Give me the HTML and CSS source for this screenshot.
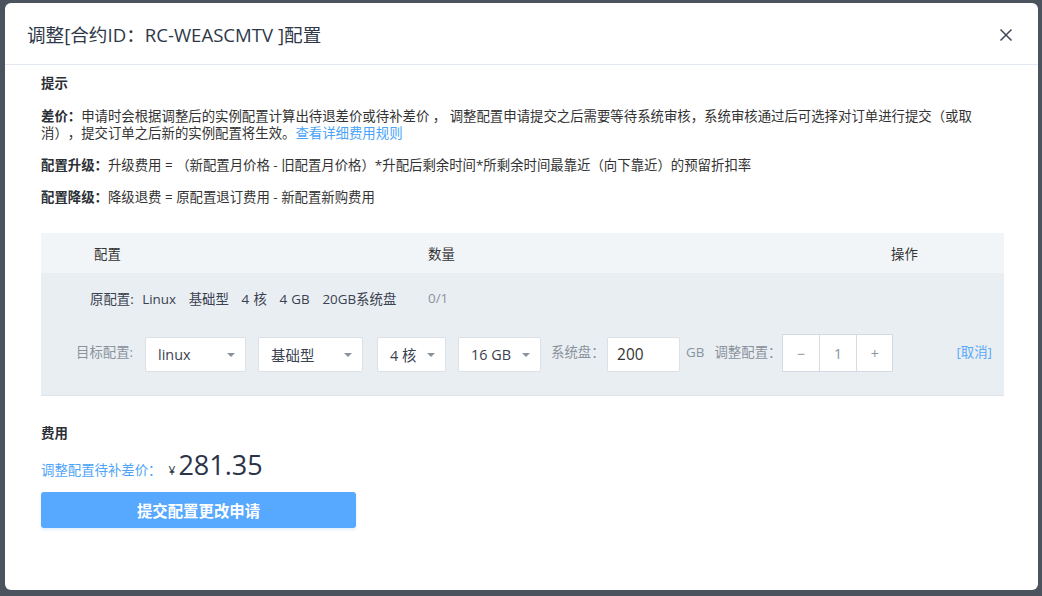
FILE: index.html
```html
<!DOCTYPE html>
<html lang="zh">
<head>
<meta charset="utf-8">
<title>调整配置</title>
<link rel="stylesheet" href="styles.css">
</head>
<body>
<div class="modal">
  <div class="modal-header">
    <div class="modal-title">调整[合约ID：RC-WEASCMTV ]配置</div>
    <svg class="close" width="14" height="14" viewBox="0 0 14 14"><path d="M1.5 1.5 L12.5 12.5 M12.5 1.5 L1.5 12.5" stroke="#3f4757" stroke-width="1.5" fill="none"/></svg>
  </div>
  <div class="modal-body">
    <div class="section-title">提示</div>
    <p class="tip tip-first"><b>差价：</b>申请时会根据调整后的实例配置计算出待退差价或待补差价 ， 调整配置申请提交之后需要等待系统审核，系统审核通过后可选择对订单进行提交（或取消），提交订单之后新的实例配置将生效。<a class="link">查看详细费用规则</a></p>
    <p class="tip"><b>配置升级：</b>升级费用 = （新配置月价格 - 旧配置月价格）*升配后剩余时间*所剩余时间最靠近（向下靠近）的预留折扣率</p>
    <p class="tip"><b>配置降级：</b>降级退费 = 原配置退订费用 - 新配置新购费用</p>

    <div class="table">
      <div class="thead">
        <div class="col-a">配置</div>
        <div class="col-b">数量</div>
        <div class="col-c">操作</div>
      </div>
      <div class="tbody">
        <div class="row-orig">
          <div class="col-a">原配置:&nbsp; Linux&nbsp;&nbsp; 基础型&nbsp;&nbsp; 4 核&nbsp;&nbsp; 4 GB&nbsp;&nbsp; 20GB系统盘</div>
          <div class="col-b muted">0/1</div>
        </div>
        <div class="row-target">
          <span class="label first-label">目标配置:</span>
          <div class="select w-os"><span>linux</span><i class="caret"></i></div>
          <div class="select w-type"><span>基础型</span><i class="caret"></i></div>
          <div class="select w-cpu"><span>4 核</span><i class="caret"></i></div>
          <div class="select w-mem"><span>16 GB</span><i class="caret"></i></div>
          <span class="label disk-label">系统盘：</span>
          <div class="input">200</div>
          <span class="label gb">GB</span>
          <span class="label adj">调整配置：</span>
          <div class="stepper">
            <span class="step-btn">−</span>
            <span class="step-val">1</span>
            <span class="step-btn">+</span>
          </div>
          <a class="link cancel">[取消]</a>
        </div>
      </div>
    </div>

    <div class="section-title fee-title">费用</div>
    <div class="price-row">
      <span class="price-label">调整配置待补差价：</span>
      <span class="yen">¥</span><span class="price">281.35</span>
    </div>
    <button class="submit">提交配置更改申请</button>
  </div>
</div>
</body>
</html>
```

FILE: styles.css
```css
html, body {
  margin: 0;
  padding: 0;
}
body {
  background: #4b545e;
  width: 1042px;
  height: 596px;
  overflow: hidden;
  font-family: "Open Sans", "Noto Sans CJK SC", sans-serif;
  color: #333;
  text-spacing-trim: space-all;
}
.modal {
  margin: 3px 0 0 5px;
  width: 1033px;
  height: 587px;
  background: #fff;
  border-radius: 6px;
  overflow: hidden;
}
.modal-header {
  height: 61px;
  border-bottom: 1px solid #e3e9f0;
  display: flex;
  align-items: center;
  justify-content: space-between;
  padding: 0 25px 0 22px;
}
.modal-title {
  font-size: 18.6px;
  color: #2f3848;
}
.close {
  display: block;
  margin-top: 2px;
}
.modal-body {
  padding: 0 34px 0 36px;
  font-size: 13.4px;
}
.section-title {
  font-weight: bold;
  line-height: 18px;
  margin-top: 9px;
  color: #2b2f36;
}
.tip {
  margin: 15px 0 0;
  line-height: 17px;
  color: #333;
}
.tip b {
  color: #2b2f36;
}
.tip-first {
  margin-top: 16px;
}
.link {
  color: #4ba3f7;
  cursor: pointer;
}
.table {
  margin-top: 27px;
  border-bottom: 1px solid #dde3ea;
}
.thead {
  height: 40px;
  background: #f2f5f8;
  display: flex;
  align-items: center;
  padding-left: 53px;
  color: #333;
}
.col-a { width: 334px; }
.col-b { width: 463px; }
.col-c { flex: 1; }
.tbody {
  background: #e9eef2;
}
.row-orig {
  height: 50px;
  display: flex;
  align-items: center;
  padding-left: 49px;
  color: #3a4150;
  word-spacing: 0.75px;
}
.row-orig .col-a { width: 338px; }
.muted { color: #8a93a0; }
.row-target {
  box-sizing: border-box;
  height: 72px;
  padding: 11px 12px 0 35px;
  display: flex;
  align-items: flex-start;
}
.label {
  color: #8a929c;
  line-height: 36px;
  white-space: nowrap;
}
.first-label { margin-right: 12px; }
.select {
  box-sizing: border-box;
  height: 35px;
  margin-top: 3px;
  background: #fff;
  border: 1px solid #dce1e7;
  border-radius: 2px;
  display: flex;
  align-items: center;
  justify-content: space-between;
  padding: 0 10px 0 12px;
  font-size: 14.4px;
  color: #3a4150;
  flex: none;
}
.w-os { width: 101px; margin-right: 12px; }
.w-type { width: 105px; margin-right: 14px; }
.w-cpu { width: 69px; margin-right: 12px; }
.w-mem { width: 83px; margin-right: 10px; }
.caret {
  width: 0;
  height: 0;
  border-left: 4px solid transparent;
  border-right: 4px solid transparent;
  border-top: 4px solid #8a929c;
}
.disk-label { width: 56px; }
.input {
  box-sizing: border-box;
  flex: none;
  width: 73px;
  height: 35px;
  margin-top: 3px;
  background: #fff;
  border: 1px solid #dce1e7;
  border-radius: 2px;
  padding-left: 9px;
  line-height: 33px;
  font-size: 15.4px;
  color: #333;
}
.gb { margin: 0 10px 0 6px; }
.adj { width: 68px; }
.stepper {
  flex: none;
  display: flex;
  width: 111px;
  height: 38px;
  box-sizing: border-box;
  border: 1px solid #d3dae2;
  background: #fff;
}
.stepper span {
  flex: 1;
  display: flex;
  align-items: center;
  justify-content: center;
  color: #8a929c;
  font-size: 14px;
}
.stepper .step-val {
  border-left: 1px solid #d3dae2;
  border-right: 1px solid #d3dae2;
}
.cancel {
  margin-left: auto;
  line-height: 36px;
  white-space: nowrap;
  color: #5aa9f7;
}
.fee-title {
  margin-top: 28px;
}
.price-row {
  margin-top: 5px;
  height: 36px;
  display: flex;
  align-items: baseline;
}
.price-label {
  color: #4ea4f5;
}
.yen {
  margin-left: 7px;
  margin-right: 3px;
  font-size: 12px;
  color: #2f3848;
}
.price {
  font-size: 27px;
  color: #2b3448;
  line-height: 36px;
}
.submit {
  display: block;
  margin-top: 9px;
  width: 315px;
  height: 36px;
  border: 0;
  border-radius: 3px;
  background: #57a8ff;
  color: #fff;
  font-family: "Open Sans", "Noto Sans CJK SC", sans-serif;
  font-size: 15.4px;
  font-weight: bold;
  box-shadow: 0 2px 3px rgba(80, 140, 200, 0.15);
}
```
